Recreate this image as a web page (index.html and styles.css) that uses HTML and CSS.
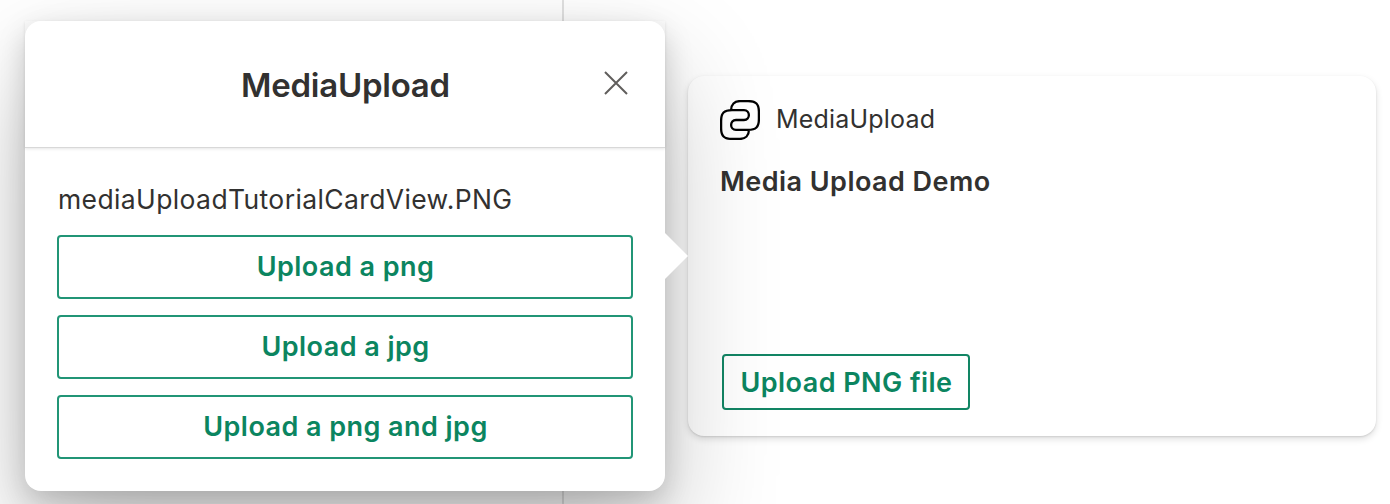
FILE: index.html
```html
<!DOCTYPE html>
<html lang="en"><head><meta charset="utf-8"><title>MediaUpload</title><link rel="stylesheet" href="styles.css"></head>
<body>
<main class="board">
<section class="dialog">
<header class="dialog-header"><h1><span>MediaUpload</span></h1>
<svg class="close" viewBox="0 0 24 24"><path d="M1 1 23 23M23 1 1 23"/></svg></header>
<div class="dialog-body"><p class="filename"><span>mediaUploadTutorialCardView.PNG</span></p>
<button>Upload a png</button><button>Upload a jpg</button><button>Upload a png and jpg</button></div>
</section>
<section class="card">
<div class="brand"><svg class="logo" viewBox="0 0 40 40"><path d="M11.100 10C11.100 4.500 14.500 1.100 20 1.100H28C36 1.100 38.900 4 38.900 12V19C38.900 27 36 29.900 28 29.900H16C9.500 29.900 9.500 20 16 20H24C30.500 20 30.500 10.100 24 10.100H12C4 10.100 1.100 13 1.100 21V28C1.100 36 4 38.900 12 38.900H20C25.500 38.900 28.900 35.500 28.900 30"/></svg><span>MediaUpload</span></div>
<h2>Media Upload Demo</h2>
<button class="card-button">Upload PNG file</button>
</section>
</main>
</body></html>
```
FILE: styles.css
```css
* { box-sizing: border-box; }
body { margin: 0; font-family: Inter, sans-serif; color: #323130; background: #fff; }
.board { height: 504px; display: flex; align-items: flex-start; padding: 21px 14px 0 25px; gap: 23px; overflow: hidden; background: linear-gradient(#e1e1e1, #e1e1e1) 562px 0 / 2px 100% no-repeat; }
.dialog { position: relative; z-index: 1; width: 640px; height: 470px; border-radius: 16px; background: #fff; box-shadow: 0 51px 115px rgba(0,0,0,.24), 0 10px 29px rgba(0,0,0,.18); }
.dialog::after { content: ""; position: absolute; left: 640px; top: 212px; border: 23px solid transparent; border-right-width: 0; border-left-color: #fff; }
.dialog-header { position: relative; height: 127px; border-bottom: 1px solid #d8d8d8; box-shadow: 0 1px 3px rgba(0,0,0,.1); display: flex; align-items: center; justify-content: center; }
h1 { margin: 1px 0 0 1px; font-size: 33px; font-weight: 600; line-height: 40px; letter-spacing: -.25px; }
.close { position: absolute; left: 579px; top: 50px; width: 24px; height: 24px; fill: none; stroke: #605e5c; stroke-width: 2; }
.dialog-body { padding: 33px 32px; display: flex; flex-direction: column; gap: 16px; }
.filename { margin: 0 0 2px; padding-left: 1px; font-size: 26.5px; line-height: 36px; letter-spacing: .38px; }
button { font: 600 27px/1 Inter, sans-serif; letter-spacing: .45px; color: #0b8560; border: 2px solid #219576; border-radius: 4px; height: 64px; padding: 0 0 2px 1px; background: transparent; white-space: nowrap; }
.card { width: 688px; height: 360px; margin-top: 55px; padding: 24px 32px; border-radius: 16px; background: #fff; box-shadow: 0 3px 7px rgba(0,0,0,.13), 0 1px 2px rgba(0,0,0,.11); }
.brand { display: flex; align-items: center; gap: 16px; font-size: 25px; letter-spacing: .2px; height: 40px; }
.brand span { margin-top: -3px; }
.logo { width: 40px; height: 40px; fill: none; stroke: #000; stroke-width: 2.3; }
h2 { margin: 24px 0 0; font-size: 27px; line-height: 36px; font-weight: 600; letter-spacing: .45px; }
.card-button { display: block; width: 248px; height: 56px; margin: 154px 0 0 2px; padding: 0 0 0 1px; border-color: #128564; }
```
